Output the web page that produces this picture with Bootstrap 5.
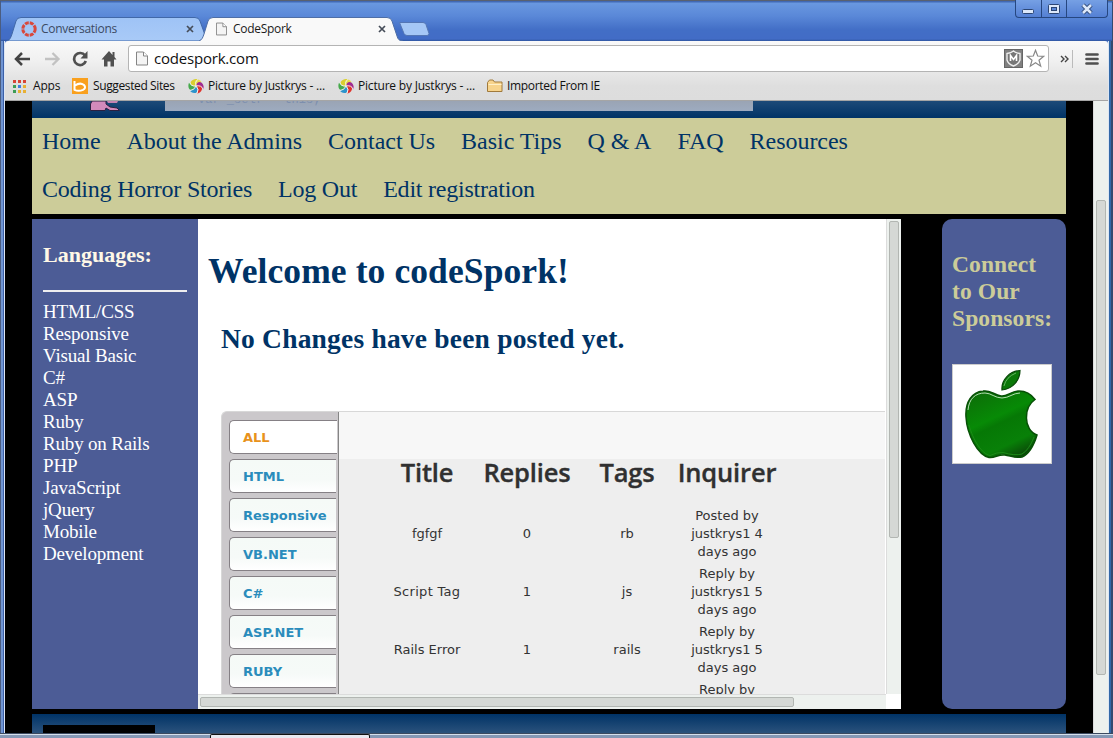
<!DOCTYPE html>
<html lang="en">
<head>
<meta charset="utf-8">
<title>CodeSpork</title>
<link rel="stylesheet" href="https://cdn.jsdelivr.net/npm/bootstrap@5.3.0/dist/css/bootstrap.min.css">
<style>
html,body{height:738px;overflow:hidden}
body{font:12px/16px "Open Sans",sans-serif;color:#111;background:#4674c8}
svg{display:block;flex:none}
.window{height:733px;padding:0 5px;background:linear-gradient(#59616f 0 1px,#3c5c92 1px 2px,transparent 2px),linear-gradient(90deg,#4b5d80 0 1px,#6f94d2 1px 3px,#3a5fa8 3px 4px,#dce6f4 4px 5px,transparent 5px 1108px,#dce6f4 1108px 1109px,#3268a8 1109px 1111px,#324a70 1111px)}
.titlebar{height:41px;margin:0 -4px;padding-left:4px;background:linear-gradient(#59616f 0 1px,#4169b4 1px 2px,#6998e0 3px,#5a88d8 16px,#426ec6 30px,#426cc6 39px,#2f56a0 41px)}
.tab-item{position:relative;height:24px;margin-top:17px}
.tab-item>.shape{position:absolute;left:0;top:0;z-index:-1}
.tab-item{z-index:1;padding-left:16px}
.tab-title{letter-spacing:-.3px;color:#1b1b1b}
.winbtns{width:93px;height:18px;border:1px solid #264780;border-top:0;border-radius:0 0 4px 4px;background:linear-gradient(#76a0e4,#5480d4)}
.winbtns>div+div{border-left:1px solid #264780}
.toolbar{height:60px;background:linear-gradient(#f9f9f9,#f0f0f0 20px,#dedede 45px,#dddddd);border-bottom:1px solid #a5a5a5;border-radius:3px 3px 0 0}
.nav-row{height:35px;padding-left:9px}
.address{width:921px;height:27px;border:1px solid #b4b4b4;border-radius:3px;background:#fff}
.url{font-size:15px;letter-spacing:-.2px;color:#111;margin-bottom:2px}
.bookmarks{height:20px;padding-left:8px}
.bookmarks span{white-space:nowrap}
.viewport{height:632px;background:#000}
.site{width:1034px;margin-left:27px;font-family:"Liberation Serif",serif}
.hero{height:17px;background:linear-gradient(#1d4a78,#003366)}
.code-strip{width:588px;height:10px;margin-left:44px;background:linear-gradient(#9aa4b4,#9dabc0);font:12px/12px "Liberation Mono",monospace;color:#7d8fae}
.code-strip div{margin:-7px 0 0 33px;letter-spacing:0}
.menu{height:96px;background:#cccc99;font-size:24px;line-height:46px;padding-left:10px;column-gap:26px}
.menu a{color:#003366;text-decoration:none;height:48px;letter-spacing:-.03px}
.menu .second{letter-spacing:-.22px}
.columns-row{height:490px;margin-top:5px}
.langs{width:166px;background:#4c5c96;color:#fff;padding:22px 11px 0;font-size:19px;line-height:22px}
.langs h2{font-size:22px;line-height:28px;font-weight:700;color:#fff8e6;margin:0 0 20.5px}
.langs .rule{height:2px;background:#eeeef0;margin-bottom:9.5px}
.langs ul{line-height:22px;letter-spacing:-.18px}
.main-pane{width:703px;background:#fff}
.pane-body{width:688px;height:475px;overflow:hidden;color:#003366}
.pane-body h1{font-size:35.5px;line-height:40px;font-weight:700;margin:32px 0 0 10px;letter-spacing:.1px}
.pane-body h2{font-size:27.5px;line-height:32px;font-weight:700;margin:32px 0 0 23px;letter-spacing:.2px}
.tabs-box{margin:56px 0 0 23px;width:664px;height:300px;background:#cbc8cb;border:1px solid #d8d8d8;border-right:0;border-radius:6px 0 0 0}
.tab-col{width:117px;padding:8px 2px 0 7px;border-right:1px solid #858585}
.side-tab{height:34px;margin-bottom:5px;border:1px solid #858085;border-right:0;border-radius:5px 0 0 5px;background:linear-gradient(#f5faf7,#f6faf8 60%,#fff);font:700 13px/33px "DejaVu Sans",sans-serif;color:#2a8cbc;padding-left:13px;flex:none}
.side-tab.current{background:#fff;color:#e8921c;margin-right:-1px}
.tab-content-box{background:linear-gradient(#f7f7f7 0 47px,#eeeeee 47px);padding:43px 0 0 38px;color:#333}
.q-grid{display:grid;grid-template-columns:repeat(4,100px);text-align:center;font:13px/18px "DejaVu Sans",sans-serif;align-items:center;grid-template-rows:50px;grid-auto-rows:58px}
.q-grid b{font:600 25.5px/34px "Open Sans",sans-serif;color:#303030;margin-bottom:16px;letter-spacing:-.15px;-webkit-text-stroke:.35px #303030}
.q-grid .wide{letter-spacing:.3px}
.q-grid .by{padding:0 10px}
.scroll-v{width:15px;background:#edf1ee;border-left:1px solid #dcdcdc}
.scroll-h{height:15px;background:#edf1ee;border-top:1px solid #dcdcdc}
.thumb{background:#d5d8d5;border:1px solid #b2b6b2;border-radius:2px}
.sponsor{width:124px;margin-left:41px;background:#4c5c96;border-radius:10px;padding:32px 10px 0;color:#cccc99}
.sponsor h3{font-size:23.5px;line-height:27px;font-weight:700;margin:0 -8px 32px 0;letter-spacing:.1px}
.logo-box{width:100px;height:100px;background:#fff;border:1px solid #ccc}
.foot{height:19px;margin-top:5px;background:linear-gradient(#003366,#2b527c);padding:11px 0 0 11px}
.foot div{width:112px;height:8px;background:#000}
.taskbar{height:5px;background:#8598b5;border-top:1px solid #3c4a60;box-shadow:inset 0 1px #d5dfeb}
.taskbar div{width:160px;height:5px;margin-left:210px;background:#e8e8f0;border:1px solid #111;border-bottom:0;border-radius:2px 2px 0 0;position:relative}
</style>
<script src="https://cdn.jsdelivr.net/npm/bootstrap@5.3.0/dist/js/bootstrap.bundle.min.js"></script>
</head>
<body>
<svg width="0" height="0" class="position-absolute">
<defs>
<linearGradient id="gInactive" x2="0" y2="1"><stop stop-color="#9ec3f6"/><stop offset="1" stop-color="#a9caf7"/></linearGradient>
<symbol id="page" viewBox="0 0 12 14"><path d="M.5.5h7l4 4v9H.5z" fill="#f4f4f4" stroke="#858585"/><path d="M7.500.5v4h4" fill="#fff" stroke="#858585"/></symbol>
<symbol id="close" viewBox="0 0 8 8"><path d="M1 1l6 6M7 1L1 7" stroke="#454c58" stroke-width="1.700"/></symbol>
<symbol id="swirl" viewBox="0 0 16 16">
<path d="M8 8C5 8 1 6 3 3.500 4.500 1.500 8 .5 9.500 1.500 7 3 6.500 5.500 8 8z" fill="#d9cf2e"/>
<path d="M8 8C6.500 5.500 6 2 9 1.500c3 0 4 1.500 4.500 3C11 4 9 5.500 8 8z" fill="#e8dc4a"/>
<path d="M8 8c0-3.500 3.500-5.500 6-3 2 2 2 5 1 6.500C14.500 8.500 11.500 6.500 8 8z" fill="#a02c90"/>
<path d="M8 8c3-2 6.500 0 6 3-.5 3-3.500 4.500-5 4.500C11 13 10.500 10 8 8z" fill="#e0332c"/>
<path d="M8 8c2.500 2 2 6.500-.5 7C5 15.500 2.500 14 2 12.500 5 12.500 7 11 8 8z" fill="#2c94cc"/>
<path d="M8 8C7 11.500 4 13 1.800 11.500 0 10 0 6 1.500 4 2 7 4.500 9 8 8z" fill="#46a94c"/>
<path d="M9.500 1.500Q6.500 4 8 8M15 11Q13.500 7 8 8M2 12.500Q6.500 12 8 8M1.500 4Q2.500 8.500 8 8M9 15.500Q11.500 11 8 8" fill="none" stroke="#f4f4f4" stroke-width=".9"/></symbol>
</defs></svg>

<div class="window">
 <header class="titlebar d-flex">
  <div class="tab-item d-flex align-items-center" style="width:192px;margin-left:2px">
   <svg class="shape" width="200" height="24"><path d="M0 24C3 23 4 20 5 17L9 4Q10 .5 14 .5H188Q192 .5 193 4L198 18Q199 22 199 24z" fill="url(#gInactive)" stroke="#4168a8"/></svg>
   <svg width="16" height="16" viewBox="0 0 16 16" class="me-1" style="margin-left:-2px"><circle cx="8" cy="8" r="6.200" fill="none" stroke="#d8483c" stroke-width="3" stroke-dasharray="3.870 1"/></svg>
   <span class="tab-title" style="color:#3b4a63">Conversations</span>
   <svg width="8" height="8" class="position-absolute" style="left:179px;top:8px"><use href="#close"/></svg>
  </div>
  <div class="tab-item d-flex align-items-center" style="width:198px;z-index:2">
   <svg class="shape" width="205" height="24"><path d="M0 24C3 23 4 20 5 17L9 4Q10 .5 14 .5H188Q192 .5 193 4L198 19Q199 24 204 24z" fill="#f9f9f9"/><path d="M0 24C3 23 4 20 5 17L9 4Q10 .5 14 .5H188Q192 .5 193 4L198 19Q199 24 204 24" fill="none" stroke="#4e6ea6"/></svg>
   <svg width="11" height="14" style="margin-left:1px;margin-right:6px"><use href="#page"/></svg>
   <span class="tab-title">CodeSpork</span>
   <svg width="8" height="8" class="position-absolute" style="left:179px;top:8px"><use href="#close"/></svg>
  </div>
  <svg width="32" height="16" style="margin:21px 0 0 2px"><path d="M.5 1.500H24q2 0 3 2l3 9q0 2-2 2H8q-2 0-3-2z" fill="#a5c7f6" stroke="#5476b4"/></svg>
  <div class="winbtns d-flex ms-auto">
   <div style="width:25px"><svg width="24" height="17"><rect x="6.500" y="9.500" width="11" height="4" rx="1" fill="#dce8fa" stroke="#2c4674"/></svg></div>
   <div style="width:25px"><svg width="24" height="17"><rect x="6.500" y="4.500" width="11" height="9" rx="1" fill="#dce8fa" stroke="#2c4674"/><rect x="9.500" y="7.500" width="5" height="3" fill="#5a86d6" stroke="#2c4674"/></svg></div>
   <div style="width:41px"><svg width="40" height="17"><path d="M16 5l8 8M24 5l-8 8" stroke="#2c4674" stroke-width="4.500"/><path d="M16 5l8 8M24 5l-8 8" stroke="#dce8fa" stroke-width="2.500"/></svg></div>
  </div>
  <div style="width:4px"></div>
 </header>

 <div class="toolbar">
  <div class="nav-row d-flex align-items-center">
   <svg width="18" height="16" viewBox="0 0 18 16"><path d="M2 8H16M8 2L2 8l6 6" fill="none" stroke="#444" stroke-width="2.500"/></svg>
   <svg width="18" height="16" viewBox="0 0 18 16" style="margin-left:11px"><path d="M2 8H15M9.500 2l6 6-6 6" fill="none" stroke="#c2c2c2" stroke-width="2.300"/></svg>
   <svg width="16" height="16" viewBox="0 0 16 16" style="margin-left:11px"><path d="M13 4.500A6 6 0 1 0 13.800 10" fill="none" stroke="#505050" stroke-width="2.700"/><path d="M15.500 0v7.500H8.500z" fill="#505050"/></svg>
   <svg width="16" height="16" viewBox="0 0 16 16" style="margin-left:13px"><path d="M8 0L.5 8.500H3V15.500H6.500V10.500h3v5H13V8.500h2.500L13.500 6V1h-2v3z" fill="#505050"/></svg>
   <div class="address d-flex align-items-center" style="margin-left:11px">
    <svg width="12" height="15" style="margin-left:7px;margin-right:6px"><use href="#page"/></svg><span class="url">codespork.com</span>
    <svg width="19" height="19" viewBox="0 0 19 19" class="ms-auto"><rect x=".5" y=".5" width="18" height="18" fill="#808080" stroke="#666"/><path d="M3 4.500Q7 4 9.500 2 12 4 16 4.500V11Q15 15 9.500 17 4 15 3 11z" fill="#777" stroke="#eee" stroke-width="1.400"/><path d="M6.500 12V6.500l3 4 3-4V12" fill="none" stroke="#fff" stroke-width="1.600"/></svg>
    <svg width="19" height="19" viewBox="0 0 19 19" style="margin:0 3px 0 3px"><path d="M9.500 1.300l2.200 5.700 6 .3-4.700 3.900 1.700 6-5.200-3.400-5.200 3.400 1.700-6L1.300 7.300l6-.3z" fill="#fff" stroke="#888" stroke-width="1.200"/></svg>
   </div>
   <svg width="9" height="8" viewBox="0 0 9 8" style="margin-left:11px"><path d="M1 1l3 3-3 3M5 1l3 3-3 3" fill="none" stroke="#444" stroke-width="1.400"/></svg>
   <div style="width:1px;height:18px;background:#bbb;margin:0 12px 0 3px"></div>
   <svg width="14" height="14"><path d="M1.500 2.500h11M1.500 7h11M1.500 11.500h11" stroke="#505050" stroke-width="2.700" stroke-linecap="round"/></svg>
  </div>
  <div class="bookmarks d-flex align-items-center">
   <svg width="13" height="13"><g fill="#d84437"><path d="M0 0h3v3H0zM5 0h3v3H5zM10 0h3v3h-3z"/></g><path d="M0 5h3v3H0z" fill="#3d9d55"/><path d="M5 5h3v3H5z" fill="#3f7ee0"/><path d="M10 5h3v3h-3z" fill="#e8b033"/><path d="M0 10h3v3H0z" fill="#3d9d55"/><path d="M5 10h3v3H5zM10 10h3v3h-3z" fill="#e8b033"/></svg>
   <span style="margin-left:7px;width:39px;letter-spacing:-.2px">Apps</span>
   <svg width="16" height="16"><rect width="16" height="16" fill="#f9a01e"/><path d="M2.500 3v9.500M3 7.500Q8 4 12 7q2.500 3-1 4.800-4.500 2-8.500 0" fill="none" stroke="#fff" stroke-width="2"/></svg>
   <span style="margin-left:5px;width:95px;letter-spacing:-.38px">Suggested Sites</span>
   <svg width="16" height="16"><use href="#swirl"/></svg>
   <span style="margin-left:4px;width:130px;letter-spacing:-.2px">Picture by Justkrys - ...</span>
   <svg width="16" height="16"><use href="#swirl"/></svg>
   <span style="margin-left:4px;width:129px;letter-spacing:-.2px">Picture by Justkrys - ...</span>
   <svg width="16" height="14"><path d="M.5 12.500v-9L2.500 1H6l1.500 2H15v9.500z" fill="#f8d48c" stroke="#a07a3c"/><path d="M1.500 5.500h13" stroke="#fff0c8"/></svg>
   <span style="margin-left:4px;letter-spacing:-.32px">Imported From IE</span>
  </div>
 </div>

 <div class="viewport d-flex">
  <main class="site">
   <div class="hero d-flex">
    <svg width="31" height="10" style="margin-left:58px"><path d="M.5 9.500V3L2 0H16v3l4 3 7 1 2.500 2.500H20L16 7l-1 2.500z" fill="#d38abb" stroke="#2b2040"/><path d="M17 0h11l-1 2h-9z" fill="#c583b0"/></svg>
    <div class="code-strip overflow-hidden"><div>var _self = this;</div></div>
   </div>
   <nav class="menu d-flex flex-wrap align-content-start">
    <a href="#">Home</a><a href="#">About the Admins</a><a href="#">Contact Us</a><a href="#">Basic Tips</a><a href="#">Q &amp; A</a><a href="#">FAQ</a><a href="#">Resources</a><div class="w-100"></div>
    <a class="second" href="#">Coding Horror Stories</a><a class="second" href="#">Log Out</a><a class="second" href="#">Edit registration</a>
   </nav>
   <div class="columns-row d-flex">
    <aside class="langs">
     <h2>Languages:</h2><div class="rule"></div>
     <ul class="list-unstyled mb-0"><li>HTML/CSS</li><li>Responsive</li><li>Visual Basic</li><li>C#</li><li>ASP</li><li>Ruby</li><li>Ruby on Rails</li><li>PHP</li><li>JavaScript</li><li>jQuery</li><li>Mobile</li><li>Development</li></ul>
    </aside>
    <section class="main-pane">
     <div class="d-flex">
      <div class="pane-body">
       <h1>Welcome to codeSpork!</h1>
       <h2>No Changes have been posted yet.</h2>
       <div class="tabs-box d-flex">
        <div class="tab-col d-flex flex-column">
         <div class="side-tab current">ALL</div><div class="side-tab">HTML</div><div class="side-tab">Responsive</div><div class="side-tab">VB.NET</div><div class="side-tab">C#</div><div class="side-tab">ASP.NET</div><div class="side-tab">RUBY</div><div class="side-tab"></div>
        </div>
        <div class="tab-content-box flex-grow-1">
         <div class="q-grid">
          <b>Title</b><b>Replies</b><b>Tags</b><b>Inquirer</b>
          <div>fgfgf</div><div>0</div><div>rb</div><div class="by">Posted by<br>justkrys1 4<br>days ago</div>
          <div class="wide">Script Tag</div><div>1</div><div>js</div><div class="by">Reply by<br>justkrys1 5<br>days ago</div>
          <div>Rails Error</div><div>1</div><div>rails</div><div class="by">Reply by<br>justkrys1 5<br>days ago</div>
          <div></div><div></div><div></div><div class="by align-self-start pt-0" style="margin-top:2px">Reply by</div>
         </div>
        </div>
       </div>
      </div>
      <div class="scroll-v"><div class="thumb" style="width:10px;height:317px;margin:2px 0 0 2px"></div></div>
     </div>
     <div class="scroll-h" style="width:688px;padding:2px 0 0 2px"><div class="thumb" style="width:594px;height:10px"></div></div>
    </section>
    <aside class="sponsor">
     <h3>Connect<br>to Our<br>Sponsors:</h3>
     <div class="logo-box"><svg width="98" height="98" viewBox="0 0 98 98">
      <defs><linearGradient id="ap" x1=".2" y1="0" x2=".7" y2="1"><stop stop-color="#0c6f08"/><stop offset=".4" stop-color="#078a06"/><stop offset=".5" stop-color="#067805"/><stop offset=".8" stop-color="#088008"/><stop offset="1" stop-color="#0a4a08"/></linearGradient></defs>
      <path d="M49 25C48 15 57 6 67 5.500C67 15 60 24 49 25z" fill="#0a7808" stroke="#064506" stroke-width="1.200"/><path d="M51 21Q53 12 63 8" fill="none" stroke="#7cc47a" stroke-width=".8"/>
      <path d="M48 31C40 29 37 25 30 26C19 27 12 37 13 52C14 70 25 90 36 92.500C42 93.500 45 89 52 90C58 91 63 93.500 69 92C76 89 81 80 84 70C78 68 73 61 73.500 52C73.500 44 77 38 82 34.500C78 29 73 26 66 26C58 26 54 32 48 31z" fill="url(#ap)" stroke="#075006" stroke-width="1.500"/>
      <path d="M15 45C16 34 22 28 32 28C38 28 42 33 49 33C56 33 60 28 67 28" fill="none" stroke="#b4dcb2" stroke-width="1"/><path d="M16 60C20 75 29 89 37 90.500Q44 87 50 87.500Q62 91 69 89Q76 85 81 72" fill="none" stroke="#1c8a18"/></svg></div>
    </aside>
   </div>
   <footer class="foot"><div></div></footer>
  </main>
  <div class="scroll-v ms-auto"><div class="thumb" style="width:10px;height:475px;margin:99px 0 0 2px"></div></div>
 </div>
</div>
<div class="taskbar"><div></div></div>
</body>
</html>
